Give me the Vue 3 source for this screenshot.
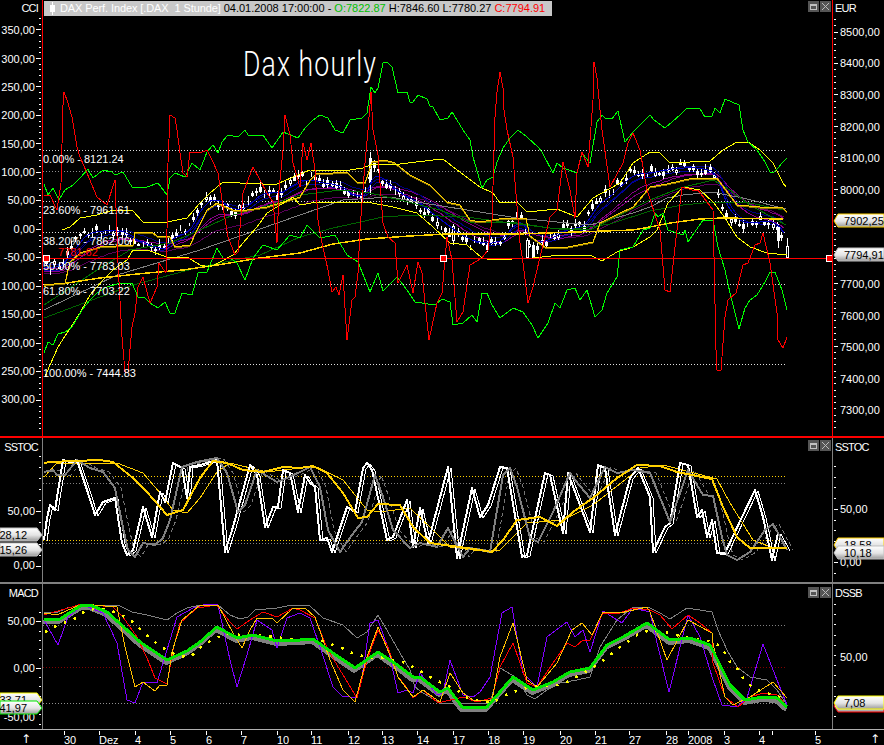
<template>
  <div class="chart">
    <svg class="defs" width="0" height="0">
      <defs>
        <linearGradient id="flagFill" x1="0" y1="0" x2="0" y2="1">
          <stop offset="0" stop-color="#ffffff" />
          <stop offset="0.55" stop-color="#e4e4e4" />
          <stop offset="1" stop-color="#9a9a9a" />
        </linearGradient>
      </defs>
    </svg>

    <section v-for="pane in panes" :key="pane.id" class="pane" :class="pane.id" :style="{ height: pane.h + 'px' }">
      <svg class="axis-left" width="42" :height="pane.h" :viewBox="`0 ${pane.y} 42 ${pane.h}`">
        <text class="axis-title" x="38" :y="pane.titleY" text-anchor="end">{{ pane.title }}</text>
        <line v-for="t in ticks(pane.left)" :key="t.y" :x1="t.major ? 36 : 39" x2="41" :y1="t.y" :y2="t.y" class="tick" />
        <text v-for="l in pane.left.labels" :key="l[0]" x="35" :y="l[0] + 4" text-anchor="end">{{ l[1] }}</text>
        <g v-for="f in pane.leftFlags" :key="f.text">
          <polygon :points="`0,${f.y} 37,${f.y} 42,${f.y + 7} 37,${f.y + 13} 0,${f.y + 13}`" fill="url(#flagFill)" :stroke="f.color" />
          <text class="flag-text" x="27" :y="f.y + 11" text-anchor="end">{{ f.text }}</text>
        </g>
      </svg>

      <div class="plot">
        <svg class="lines" width="789" :height="pane.h" :viewBox="`43 ${pane.y} 789 ${pane.h}`">
          <line v-for="g in pane.grid" :key="g[0] + g[1]" x1="43" x2="787" :y1="g[0]" :y2="g[0]" :stroke="g[1]" stroke-dasharray="1 2" />

          <template v-if="pane.id === 'price'">
            <polyline v-for="b in bands" :key="b.key" :points="b.pts" :stroke="b.stroke" fill="none" />
            <g v-for="c in candles" :key="c.x">
              <line :x1="c.x" :x2="c.x" :y1="c.hi" :y2="c.lo" stroke="#fff" />
              <rect :x="c.x - 1" :y="c.top" width="2" :height="c.h" :fill="c.hollow ? '#000' : '#fff'" stroke="#fff" />
            </g>
            <polyline :points="bands[5].pts" stroke="#0000c0" fill="none" />
          </template>

          <polyline
            v-for="s in pane.series"
            :key="s.key"
            :points="s.pts"
            :stroke="s.stroke"
            :stroke-width="s.w || 1"
            :stroke-dasharray="s.dash"
            :transform="s.shift"
            stroke-linejoin="round"
            fill="none"
          />

          <template v-if="pane.id === 'price'">
            <line x1="43" x2="832" y1="258" y2="258" stroke="#ff0000" />
            <rect v-for="x in [46, 443, 829]" :key="x" :x="x - 3" y="255" width="6" height="6" fill="#ff0000" stroke="#fff" />
            <text v-for="f in fibs" :key="f[1]" class="fib" x="43" :y="f[0]">{{ f[1] }}</text>
            <text class="fib red-label" x="58" y="256">7781.62</text>
            <text class="hand-note" transform="translate(243 76) scale(0.74 1)">Dax  hourly</text>
          </template>
        </svg>

        <div v-if="pane.id === 'price'" class="legend">
          <span class="legend-icon"></span>
          <span class="legend-name">DAX Perf. Index [.DAX&nbsp; 1 Stunde]</span>
          <span>04.01.2008 17:00:00 -</span>
          <span class="open">O:7822.87</span>
          <span>H:7846.60</span>
          <span>L:7780.27</span>
          <span class="close">C:7794.91</span>
        </div>
        <div class="win-btns">
          <span class="win-btn"><i class="win-max"></i></span>
          <span class="win-btn win-x">
            <svg width="9" height="9" viewBox="0 0 9 9"><path d="M1 1 L8 8 M8 1 L1 8" stroke="#bbb" fill="none" /></svg>
          </span>
        </div>
      </div>

      <svg class="axis-right" width="51" :height="pane.h" :viewBox="`833 ${pane.y} 51 ${pane.h}`">
        <text class="axis-title" x="835" :y="pane.titleY">{{ pane.rightTitle }}</text>
        <line v-for="t in ticks(pane.right)" :key="t.y" x1="834" :x2="t.major ? 838 : 836" :y1="t.y" :y2="t.y" class="tick" />
        <text v-for="l in pane.right.labels" :key="l[0]" x="840" :y="l[0] + 4">{{ l[1] }}</text>
        <g v-for="f in pane.rightFlags" :key="f.y">
          <polygon :points="`884,${f.y} 838,${f.y} 834,${f.y + 7} 838,${f.y + 13} 884,${f.y + 13}`" fill="url(#flagFill)" :stroke="f.color" />
          <text class="flag-text" x="844" :y="f.y + 11">{{ f.text }}</text>
        </g>
      </svg>
    </section>

    <svg class="dates" width="884" height="15" viewBox="0 730 884 15">
      <text class="arrow" x="26" y="743" text-anchor="middle">↑</text>
      <g v-for="d in dates" :key="d[1]">
        <line :x1="d[0]" :x2="d[0]" y1="731" y2="735" class="tick" />
        <text :x="d[0]" y="744">{{ d[1] }}</text>
      </g>
      <line x1="772" x2="772" y1="731" y2="735" class="tick" />
      <text class="arrow" x="875" y="743" text-anchor="middle">↑</text>
    </svg>
  </div>
</template>

<script setup>
// price path the moving averages and candles are built from
const mid = parse('44,267 62,266 68,250 76,240 84,231 95,230 110,230 122,232 135,242 145,245 155,250 165,249 172,232 185,232 190,225 200,200 212,196 222,205 232,212 245,207 255,193 270,190 280,195 290,183 300,177 320,183 340,187 350,198 365,195 372,165 385,185 400,197 415,203 435,220 453,233 470,243 490,243 500,240 510,222 520,218 530,248 545,240 560,230 583,225 595,200 610,192 630,172 650,172 670,168 690,167 712,172 718,190 725,218 740,225 755,222 770,220 780,232 787,250')

function parse(str) {
  return str.split(' ').map((p) => p.split(',').map(Number))
}

function priceAt(x) {
  for (let i = 1; i < mid.length; i++) {
    if (x <= mid[i][0]) {
      const [x0, y0] = mid[i - 1]
      const [x1, y1] = mid[i]
      return y0 + ((y1 - y0) * (x - x0)) / (x1 - x0)
    }
  }
  return mid[mid.length - 1][1]
}

function ema(alpha, offset) {
  let v = priceAt(44)
  const out = []
  for (let x = 44; x <= 787; x += 4) {
    v += alpha * (priceAt(x) - v)
    out.push(`${x},${Math.round(v + offset)}`)
  }
  return out.join(' ')
}

function rnd(i) {
  const n = Math.sin(i * 12.9898) * 43758.5453
  return n - Math.floor(n)
}

const bands = [
  { key: 'p2', stroke: '#5a005a', pts: ema(0.07, 6) },
  { key: 'p1', stroke: '#800080', pts: ema(0.11, 1) },
  { key: 'p3', stroke: '#8a008a', pts: ema(0.16, 4) },
  { key: 'b3', stroke: '#000080', pts: ema(0.2, -3) },
  { key: 'b2', stroke: '#0000a0', pts: ema(0.28, 3) },
  { key: 'b1', stroke: '#0000d0', pts: ema(0.4, 0) },
]

const candles = []
for (let i = 0, x = 46; x < 785; i++, x += 4.2) {
  const px = Math.round(x)
  const y = priceAt(x) + (rnd(i) - 0.5) * 9
  const h = Math.round(rnd(i + 50) * 4)
  candles.push({
    x: px,
    top: Math.round(y - h / 2),
    h,
    hi: Math.round(y - h / 2 - 1 - rnd(i + 90) * 4),
    lo: Math.round(y + h / 2 + 1 + rnd(i + 130) * 4),
    hollow: rnd(i + 170) > 0.8,
  })
}
candles.push({ x: 370, top: 158, h: 22, hi: 152, lo: 195, hollow: false })
candles.push({ x: 453, top: 226, h: 14, hi: 224, lo: 245, hollow: true })
candles.push({ x: 527, top: 240, h: 17, hi: 238, lo: 258, hollow: true })
candles.push({ x: 533, top: 247, h: 10, hi: 243, lo: 258, hollow: false })
candles.push({ x: 778, top: 227, h: 13, hi: 224, lo: 248, hollow: false })
candles.push({ x: 787, top: 246, h: 11, hi: 238, lo: 258, hollow: true })

const priceSeries = [
  { key: 'gray', stroke: '#808080', pts: '44,310 117,275 200,250 300,215 343,200 390,197 423,203 467,210 517,218 567,223 590,225 633,213 650,207 667,198 683,195 713,192 727,195 743,198 786,209' },
  { key: 'greenSlow', stroke: '#006400', pts: '44,318 100,297 133,285 200,267 260,255 300,237 333,228 383,217 413,215 467,217 517,224 567,230 610,224 650,211 683,205 713,202 750,203 783,210' },
  { key: 'greenFast', stroke: '#007000', pts: '44,305 67,290 100,268 130,250 170,243 200,230 233,215 270,205 300,195 340,190 370,193 400,200 440,210 470,222 510,222 550,228 590,230 620,215 650,200 680,188 713,180 730,190 750,205 786,225' },
  { key: 'ma200', stroke: '#ffd400', w: 1.5, pts: '44,286 67,283 100,278 147,273 183,270 217,265 260,258 300,253 333,244 367,239 410,236 447,234 517,234 633,230 650,227 670,223 700,219 723,218 783,219' },
  { key: 'goldShade', stroke: '#8f7800', shift: 'translate(0 1)', pts: goldPts() },
  { key: 'gold', stroke: '#ffd000', pts: goldPts() },
  { key: 'bollUp', stroke: '#ffff00', pts: '62,230 70,227 80,218 97,215 113,210 132,210 143,222 167,222 187,218 200,203 210,193 223,182 240,183 263,184 277,184 293,177 310,170 343,171 363,168 370,165 400,164 433,160 443,159 457,170 480,187 493,193 500,203 517,202 527,212 557,209 577,217 593,198 620,183 633,163 650,152 660,153 670,163 710,161 723,150 737,142 748,142 760,150 773,163 783,183 786,187' },
  { key: 'bollDown', stroke: '#ffff00', pts: '45,377 50,365 58,347 67,333 80,313 90,295 103,280 113,270 127,260 133,250 147,250 167,257 187,257 200,265 210,267 220,262 233,255 243,243 257,227 267,213 277,207 293,197 300,205 317,202 367,202 393,207 417,213 433,227 450,243 467,245 482,258 492,260 533,258 560,255 590,255 602,261 617,252 633,247 650,237 657,230 668,203 683,187 700,190 713,202 723,215 737,237 750,247 767,253 787,255' },
  { key: 'cciHigh', stroke: '#00ff00', pts: '44,184 48,195 53,188 59,200 65,190 73,185 80,178 88,169 93,178 103,170 112,172 115,175 123,172 132,187 147,187 158,183 167,195 170,178 175,173 185,177 192,163 200,170 207,152 213,145 218,153 222,142 228,135 238,137 245,130 248,135 263,135 272,148 283,132 298,138 305,128 312,121 320,115 328,118 335,130 343,133 350,120 362,118 367,113 371,87 375,93 378,88 383,63 387,62 392,67 398,93 407,92 410,102 413,102 418,95 427,99 430,106 433,107 440,120 448,118 452,112 457,120 463,130 470,140 473,157 482,188 487,180 493,177 497,162 503,148 510,138 518,130 527,137 538,147 542,152 553,173 557,163 563,168 577,173 582,153 590,163 597,122 602,115 605,118 612,119 618,111 620,120 625,142 633,132 640,125 650,115 654,120 665,128 680,115 687,108 700,109 705,117 712,116 715,108 720,113 725,99 739,105 743,130 748,142 757,150 765,162 770,172 773,173 778,168 782,163 787,158' },
  { key: 'cciLow', stroke: '#00ff00', pts: '44,353 48,342 53,345 58,334 65,332 72,327 82,310 90,300 97,293 107,287 120,283 132,283 138,297 145,298 150,303 158,308 165,302 170,313 175,313 182,293 192,295 198,273 207,272 217,248 223,258 230,258 237,263 245,280 253,258 263,245 277,250 290,235 300,238 307,225 320,238 335,235 347,255 358,262 370,292 378,273 383,291 397,277 407,290 415,302 435,305 442,299 450,302 453,325 463,323 472,315 477,322 482,293 487,293 492,305 500,318 513,308 523,312 532,325 538,338 548,323 555,303 560,308 567,290 575,288 580,300 587,290 595,317 602,310 607,293 617,277 620,250 628,248 633,247 643,230 650,228 655,213 658,217 663,213 668,230 683,235 685,230 688,242 703,220 713,220 718,247 725,270 730,293 739,329 745,308 750,300 757,295 765,282 770,272 775,272 782,290 787,310' },
  { key: 'cci', stroke: '#ff0000', pts: '44,195 50,195 57,210 61,183 63,105 64,92 68,103 72,117 77,147 80,157 87,173 97,197 107,205 115,180 118,263 122,337 125,372 128,372 132,327 135,313 138,287 143,277 150,303 157,287 159,263 166,273 167,230 168,163 170,115 175,118 177,130 180,153 183,173 187,177 190,152 200,153 207,150 213,162 218,173 223,207 228,237 235,255 238,252 243,193 253,167 260,180 267,193 273,202 277,243 279,190 283,150 285,115 290,135 293,163 300,187 303,143 307,160 311,143 315,170 318,220 322,243 328,270 332,292 336,287 339,295 343,275 347,340 352,300 355,297 358,273 360,230 365,163 368,130 371,92 373,130 378,155 382,210 383,223 388,237 395,243 398,283 407,265 413,293 418,262 422,273 425,303 429,340 437,303 442,293 447,237 452,260 457,322 463,312 470,265 482,258 488,250 492,220 495,117 497,92 500,72 503,88 504,110 507,130 513,157 520,243 523,263 528,303 533,287 540,257 550,217 557,210 563,162 570,190 575,218 577,173 582,152 588,167 593,100 594,62 597,78 600,110 602,130 610,187 623,163 628,143 633,133 640,150 647,190 660,230 665,290 670,292 675,247 682,187 692,190 698,190 713,210 716,350 717,370 721,370 725,317 728,300 736,293 743,265 748,263 755,245 760,243 763,233 770,263 777,313 778,340 783,348 787,337' },
]

function goldPts() {
  return '44,285 65,283 70,262 80,253 100,247 133,245 135,232 152,232 157,236 170,237 175,247 190,245 197,230 207,210 217,203 233,210 247,210 267,207 280,203 300,197 310,180 317,173 333,173 347,172 357,182 365,183 372,162 385,160 395,163 410,175 430,185 447,202 460,205 470,220 480,222 505,218 526,218 530,236 545,247 563,248 593,242 600,223 620,213 633,207 650,187 667,184 693,178 717,178 737,205 760,207 783,208 787,212'
}

const stochWhite = '44,540 47,518 50,505 55,510 63,460 70,462 77,460 87,490 95,515 103,502 115,498 122,543 127,555 133,550 143,507 152,537 160,492 165,502 173,463 182,468 187,498 190,467 200,465 217,460 225,552 233,527 250,465 257,475 265,527 273,507 278,507 283,470 290,473 298,512 305,475 310,483 315,487 320,540 327,538 332,552 347,507 355,512 363,468 367,463 372,470 387,540 393,537 407,500 413,547 420,508 428,543 448,467 457,558 463,530 472,488 480,517 488,505 500,467 507,468 522,557 527,555 545,473 550,475 563,533 568,473 590,532 598,465 605,468 615,535 630,478 638,468 650,497 653,552 665,527 670,523 680,463 688,465 697,517 702,510 707,537 712,520 717,553 725,553 742,517 755,490 763,517 772,560 778,533 787,550'
const stochGray = '44,472 53,470 57,475 65,475 77,460 90,468 103,472 115,488 122,523 128,550 135,557 143,543 155,545 163,538 170,520 182,467 197,462 217,458 227,473 238,512 245,505 257,470 277,482 287,478 300,472 310,467 320,487 328,530 340,552 352,535 362,522 375,475 383,497 393,530 410,548 420,543 437,547 448,528 463,557 470,548 490,552 503,475 510,468 517,487 530,538 538,542 553,512 570,473 575,480 590,498 605,467 617,473 633,470 650,473 670,522 688,470 703,495 713,496 722,537 727,555 737,560 750,552 765,530 773,524 778,533 787,550'

const stochSeries = [
  { key: 'grayDash', stroke: '#777', pts: stochGray, dash: '4 3', shift: 'translate(6 0)' },
  { key: 'whiteThin', stroke: '#fff', pts: stochWhite, shift: 'translate(3 1)' },
  { key: 'goldThin', stroke: '#ffd000', pts: '44,477 57,463 117,463 143,473 160,493 173,510 187,513 200,498 217,472 230,463 267,472 300,468 317,467 343,480 367,510 380,512 410,508 433,530 450,547 473,550 500,550 527,523 563,520 593,505 640,468 663,465 717,479 730,503 753,540 773,548 787,548' },
  { key: 'white', stroke: '#fff', w: 2, pts: stochWhite },
  { key: 'grayFat', stroke: '#808080', w: 2, pts: stochGray },
  { key: 'goldFat', stroke: '#ffd000', w: 2, pts: '44,463 50,462 100,460 113,462 133,478 147,492 167,515 183,510 200,478 213,461 227,463 243,470 263,472 283,467 300,468 313,466 327,473 343,493 358,518 367,517 378,504 400,505 413,527 430,543 467,548 492,552 503,540 517,520 540,517 557,526 573,512 587,502 593,498 617,478 637,465 660,466 677,472 712,479 723,507 737,537 750,548 767,548 787,548' },
]

const macdGreen = '44,619 60,619 82,605 90,605 107,612 127,630 140,642 167,660 187,651 200,642 217,627 237,638 253,635 277,641 300,640 313,639 333,653 355,668 378,652 400,667 413,677 420,677 440,692 448,688 462,707 487,707 513,677 533,690 553,682 570,672 590,668 607,645 623,637 647,623 650,625 670,640 690,638 710,645 730,685 745,700 763,697 777,698 787,707'

const macdSeries = [
  { key: 'shadow', stroke: '#808080', w: 4, pts: macdGreen, shift: 'translate(-1 3)' },
  { key: 'grayThin', stroke: '#808080', pts: '44,612 58,612 67,608 83,605 120,606 132,612 147,615 167,620 177,613 187,608 200,605 218,605 230,615 240,619 248,617 255,610 277,608 292,605 310,606 323,618 343,625 357,638 367,632 378,615 388,632 400,653 410,670 415,687 423,693 440,703 490,703 500,668 517,678 527,695 535,699 547,690 560,683 577,680 590,677 600,647 617,620 633,607 650,608 660,613 670,619 687,608 712,612 718,630 727,650 737,667 750,677 767,680 777,690 787,705' },
  { key: 'purple', stroke: '#8000ff', pts: '44,620 58,645 68,617 83,605 103,613 117,643 127,700 135,703 143,682 157,683 170,640 177,617 193,608 207,604 218,605 230,660 237,687 247,655 257,620 272,630 277,648 287,618 300,613 310,618 322,653 333,687 342,696 357,698 362,677 370,623 378,620 388,648 398,693 407,690 413,693 420,673 437,695 443,693 450,660 463,695 473,697 480,692 490,677 502,613 512,607 523,673 537,687 547,637 567,622 575,637 583,630 590,652 603,611 622,623 633,608 650,612 658,647 669,692 688,615 700,637 713,680 722,705 737,707 747,698 763,644 777,680 787,705' },
  { key: 'red', stroke: '#ff0000', pts: '44,615 82,604 113,607 123,617 137,637 147,658 155,678 167,684 173,650 180,623 197,608 217,605 230,622 237,629 250,620 263,612 277,617 293,608 300,610 315,618 328,650 340,670 357,698 367,660 378,630 388,647 398,677 407,688 413,698 423,690 438,703 463,697 477,702 492,698 500,667 513,643 527,683 537,687 553,663 567,643 575,647 583,640 590,640 603,613 620,613 633,608 650,610 660,615 672,629 688,615 700,623 712,633 713,663 725,697 738,707 750,697 763,693 777,695 787,706' },
  { key: 'yellow', stroke: '#ffc000', pts: '44,613 57,615 82,604 117,607 125,647 135,687 143,682 155,691 160,685 167,685 172,652 182,620 200,605 218,605 233,633 242,648 250,630 257,618 272,618 277,623 293,608 305,608 315,617 330,660 343,690 355,702 367,657 378,627 392,660 398,677 413,697 423,690 440,702 450,673 463,693 473,700 492,700 500,657 513,623 527,680 537,687 557,663 572,630 582,623 592,635 603,612 620,613 647,607 650,612 667,660 688,620 712,633 713,643 725,697 733,705 750,697 773,682 787,698' },
  { key: 'dots', stroke: '#ffff00', w: 2.5, dash: '2.5 8', pts: '45,632 58,625 66,622 76,618 82,613 93,609 107,609 117,613 125,617 134,623 143,632 155,642 166,650 179,656 190,657 200,648 212,640 225,634 243,635 260,635 290,639 320,640 333,645 342,648 352,653 370,658 378,657 403,662 415,668 432,678 440,682 457,690 467,698 492,703 500,698 510,693 530,687 557,685 567,682 580,675 597,665 610,655 623,645 637,635 650,630 670,633 683,637 703,640 713,642 718,645 723,650 730,662 737,668 743,678 748,683 753,688 760,691 773,695 787,699' },
  { key: 'green', stroke: '#00e600', w: 3, pts: macdGreen },
]

function evenTicks(from, to, step) {
  return { from, to, step }
}

function ticks(axis) {
  const out = []
  for (let y = axis.from; y <= axis.to; y += axis.step) {
    const ry = Math.round(y)
    out.push({ y: ry, major: axis.labels.some((l) => Math.abs(l[0] - ry) < 2) })
  }
  return out
}

const panes = [
  {
    id: 'price',
    y: 0,
    h: 436,
    title: 'CCI',
    rightTitle: 'EUR',
    titleY: 12,
    left: {
      ...evenTicks(18, 432, 5.7),
      labels: [[30, '350,00'], [59, '300,00'], [87, '250,00'], [115, '200,00'], [144, '150,00'], [172, '100,00'], [200, '50,00'], [229, '0,00'], [257, '-50,00'], [286, '100,00'], [314, '150,00'], [343, '200,00'], [371, '250,00'], [399, '300,00']],
    },
    right: {
      ...evenTicks(19, 432, 6.28),
      labels: [[32, '8500,00'], [63, '8400,00'], [95, '8300,00'], [127, '8200,00'], [158, '8100,00'], [190, '8000,00'], [284, '7700,00'], [316, '7600,00'], [347, '7500,00'], [379, '7400,00'], [410, '7300,00']],
    },
    leftFlags: [],
    rightFlags: [
      { y: 214, text: '7902,25', color: '#ffd000' },
      { y: 248, text: '7794,91', color: '#c0c0c0' },
    ],
    grid: [[150, '#e0e0e0'], [171, '#909090'], [201, '#e0e0e0'], [232, '#e0e0e0'], [284, '#e0e0e0'], [364, '#e0e0e0']],
    series: priceSeries,
  },
  {
    id: 'stoch',
    y: 438,
    h: 144,
    title: 'SSTOC',
    rightTitle: 'SSTOC',
    titleY: 451,
    left: { ...evenTicks(456, 576, 11), labels: [[511, '50,00'], [565, '0,00']] },
    right: { ...evenTicks(466, 576, 10.7), labels: [[509, '50,00'], [562, '0,00']] },
    leftFlags: [
      { y: 528, text: '28,12', color: '#c0c0c0' },
      { y: 543, text: '15,26', color: '#c0c0c0' },
    ],
    rightFlags: [
      { y: 538, text: '18,58', color: '#ffd000' },
      { y: 546, text: '10,18', color: '#c0c0c0' },
    ],
    grid: [[476, '#ffd000'], [483, '#808080'], [540, '#ffd000'], [543, '#808080']],
    series: stochSeries,
  },
  {
    id: 'macd',
    y: 584,
    h: 145,
    title: 'MACD',
    rightTitle: 'DSSB',
    titleY: 597,
    left: { ...evenTicks(612, 726, 9.3), labels: [[621, '50,00'], [668, '0,00'], [717, '-50,00']] },
    right: { ...evenTicks(604, 726, 10.2), labels: [[657, '50,00']] },
    leftFlags: [
      { y: 693, text: '33,71', color: '#ffff00' },
      { y: 701, text: '41,97', color: '#00e600' },
    ],
    rightFlags: [
      { y: 699, text: '', color: '#ff0000' },
      { y: 696, text: '7,08', color: '#ffff00' },
    ],
    grid: [[625, '#808080'], [667, '#800000'], [703, '#909090']],
    series: macdSeries,
  },
]

const fibs = [
  [163, '0.00% - 8121.24'],
  [214, '23.60% - 7961.61'],
  [245, '38.20% - 7862.06'],
  [270, '50.00% - 7783.03'],
  [295, '61.80% - 7703.22'],
  [377, '100.00% - 7444.83'],
]

const dates = [
  [64, '30'], [99, 'Dez'], [135, '4'], [170, '5'], [206, '6'], [241, '7'], [277, '10'],
  [311, '11'], [348, '12'], [382, '13'], [417, '14'], [453, '17'], [488, '18'], [523, '19'],
  [560, '20'], [595, '21'], [629, '27'], [666, '28'], [688, '2008'], [724, '3'], [759, '4'], [815, '5'],
]
</script>

<style>
html,
body {
  background: #000;
}
</style>

<style scoped>
.chart {
  width: 884px;
  height: 745px;
  background: #000;
  overflow: hidden;
  position: relative;
  display: flex;
  flex-direction: column;
  font-family: "Liberation Sans", Arial, sans-serif;
}
.defs {
  position: absolute;
}
.pane {
  display: flex;
  flex: none;
}
.pane.price {
  border-bottom: 2px solid #ff0000;
}
.pane.stoch {
  border-bottom: 2px solid #808080;
}
.pane.macd {
  border-bottom: 1px solid #b0b0b0;
}
.plot {
  position: relative;
  width: 789px;
  border-left: 1px solid #808080;
  border-right: 1px solid #808080;
  flex: none;
}
.price .plot {
  border-color: #ff0000;
}
.axis-left,
.axis-right,
.lines,
.dates {
  display: block;
  flex: none;
}
.lines {
  shape-rendering: crispEdges;
}
svg text {
  font-size: 11px;
  fill: #fff;
  shape-rendering: auto;
}
.axis-title {
  font-size: 11px;
  letter-spacing: -0.8px;
}
.tick {
  stroke: #fff;
  shape-rendering: crispEdges;
}
.flag-text {
  fill: #000;
  font-size: 11px;
}
.red-label {
  fill: #ff0000;
}
.hand-note {
  font-family: Roboto, "Liberation Sans", sans-serif;
  font-weight: 300;
  font-size: 36px;
  letter-spacing: 1.5px;
  white-space: pre;
}
.arrow {
  font-family: "DejaVu Sans", sans-serif;
  font-size: 12px;
}
.legend {
  position: absolute;
  left: 1px;
  top: 1px;
  height: 15px;
  width: 508px;
  box-sizing: border-box;
  padding-left: 6px;
  background: #c8c8c8;
  color: #000;
  font-size: 11px;
  line-height: 15px;
  display: flex;
  align-items: center;
  gap: 3px;
  white-space: pre;
  overflow: hidden;
}
.legend-icon {
  width: 5px;
  height: 7px;
  background: #fff;
  margin-right: 2px;
  position: relative;
  flex: none;
}
.legend-icon::before {
  content: "";
  position: absolute;
  left: 2px;
  top: -3px;
  width: 1px;
  height: 13px;
  background: #fff;
}
.legend-name {
  color: #fff;
  letter-spacing: -0.1px;
}
.open {
  color: #00c000;
}
.close {
  color: #ff0000;
}
.win-btns {
  position: absolute;
  right: 1px;
  top: 1px;
  display: flex;
  gap: 1px;
}
.stoch .win-btns {
  top: 2px;
}
.macd .win-btns {
  top: 3px;
}
.win-btn {
  width: 11px;
  height: 11px;
  background: #555;
  display: flex;
  align-items: center;
  justify-content: center;
}
.win-max {
  width: 7px;
  height: 6px;
  border: 1px solid #c0c0c0;
  border-top-width: 2px;
  box-sizing: border-box;
}
</style>
